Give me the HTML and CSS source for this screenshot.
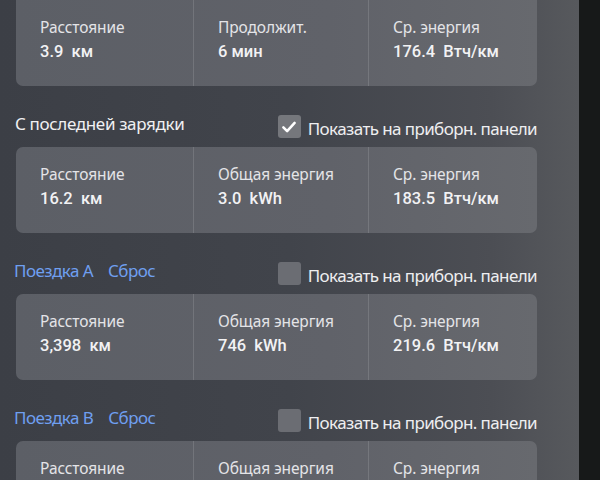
FILE: index.html
```html
<!DOCTYPE html>
<html lang="ru">
<head>
<meta charset="utf-8">
<link rel="stylesheet" href="styles.css">
</head>
<body>
<div class="bezel">
  <main class="screen">
    <section class="card first">
      <div class="cell"><div class="label">Расстояние</div><div class="value">3.9&nbsp; км</div></div>
      <div class="cell"><div class="label">Продолжит.</div><div class="value">6 мин</div></div>
      <div class="cell"><div class="label">Ср. энергия</div><div class="value">176.4&nbsp; Втч/км</div></div>
    </section>

    <header class="head">
      <div class="title">С последней зарядки</div>
      <label class="show"><span class="box checked"><svg viewBox="0 0 24 24" width="18" height="18"><path d="M4.5 12.5 L9.5 17.5 L19.5 6.5" fill="none" stroke="#fff" stroke-width="3.4" stroke-linecap="round" stroke-linejoin="round"/></svg></span><span class="show-text">Показать на приборн. панели</span></label>
    </header>
    <section class="card">
      <div class="cell"><div class="label">Расстояние</div><div class="value">16.2&nbsp; км</div></div>
      <div class="cell"><div class="label">Общая энергия</div><div class="value">3.0&nbsp; kWh</div></div>
      <div class="cell"><div class="label">Ср. энергия</div><div class="value">183.5&nbsp; Втч/км</div></div>
    </section>

    <header class="head">
      <div class="title links"><span class="link">Поездка А</span><span class="link">Сброс</span></div>
      <label class="show"><span class="box"></span><span class="show-text">Показать на приборн. панели</span></label>
    </header>
    <section class="card">
      <div class="cell"><div class="label">Расстояние</div><div class="value">3,398&nbsp; км</div></div>
      <div class="cell"><div class="label">Общая энергия</div><div class="value">746&nbsp; kWh</div></div>
      <div class="cell"><div class="label">Ср. энергия</div><div class="value">219.6&nbsp; Втч/км</div></div>
    </section>

    <header class="head">
      <div class="title links"><span class="link">Поездка B</span><span class="link">Сброс</span></div>
      <label class="show"><span class="box"></span><span class="show-text">Показать на приборн. панели</span></label>
    </header>
    <section class="card">
      <div class="cell"><div class="label">Расстояние</div><div class="value">&nbsp;</div></div>
      <div class="cell"><div class="label">Общая энергия</div><div class="value">&nbsp;</div></div>
      <div class="cell"><div class="label">Ср. энергия</div><div class="value">&nbsp;</div></div>
    </section>
  </main>
</div>
</body>
</html>
```

FILE: styles.css
```css
* { box-sizing: border-box; }
html, body { margin: 0; padding: 0; }
body {
  width: 600px;
  height: 480px;
  overflow: hidden;
  background: #171919;
  font-family: "Noto Sans", "Open Sans", sans-serif;
  color: #e9e9eb;
}
.bezel {
  width: 600px;
  height: 480px;
  display: flex;
}
.screen {
  width: 579px;
  height: 480px;
  overflow: hidden;
  background: linear-gradient(90deg, #3c3f46 0%, #41444b 50%, #4c4e54 85%, #57595d 100%);
  padding: 0 0 0 16px;
  display: flex;
  flex-direction: column;
}
.card {
  width: 521px;
  flex: 0 0 86px;
  height: 86px;
  border-radius: 7px;
  background: linear-gradient(90deg, #5c5f66 0%, #606269 60%, #67696e 100%);
  display: grid;
  grid-template-columns: 177px 175px 1fr;
  overflow: hidden;
}
.card.first {
  margin-top: -6px;
  flex-basis: 92px;
  height: 92px;
  padding-top: 6px;
}
.cell {
  padding: 16px 0 0 24px;
  border-left: 1px solid rgba(255,255,255,0.13);
}
.cell:first-child { border-left: none; }
.label {
  font-size: 15.5px;
  line-height: 22px;
  color: #e4e4e7;
  letter-spacing: -0.1px;
}
.value {
  font-family: Roboto, "Liberation Sans", sans-serif;
  font-weight: 500;
  font-size: 16.5px;
  line-height: 24px;
  margin-top: 2px;
  color: #f2f2f4;
}
.head {
  flex: 0 0 61px;
  height: 61px;
  width: 521px;
  display: flex;
  align-items: center;
  justify-content: space-between;
  padding: 20px 0 0 0;
}
.title {
  font-size: 17px;
  letter-spacing: -0.35px;
  color: #f0f0f2;
  margin-left: -1px;
  margin-top: -6px;
}
.links { display: flex; gap: 15px; margin-left: -2px; }
.link { color: #6f9ff0; letter-spacing: -0.55px; }
.show {
  display: flex;
  align-items: center;
  gap: 7px;
}
.box {
  width: 23px;
  height: 23px;
  border-radius: 3px;
  background: #6b6d73;
  display: flex;
  align-items: center;
  justify-content: center;
}
.box.checked { background: #75777c; }
.show-text {
  font-size: 17px;
  letter-spacing: -0.6px;
  color: #eeeef0;
  margin-top: 3px;
}
```
